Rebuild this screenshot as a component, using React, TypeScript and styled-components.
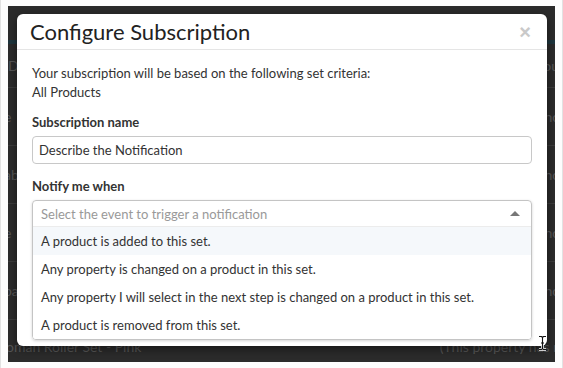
import React from 'react';
import styled, { createGlobalStyle } from 'styled-components';

const GlobalStyle = createGlobalStyle`
  html, body {
    margin: 0;
    padding: 0;
    background: #ffffff;
  }
  body {
    font-family: Lato, "Liberation Sans", Arial, sans-serif;
    color: #333;
  }
`;

const rows = [
  { left: 'ID', right: 'ou', header: true },
  { left: 'e', right: 'nc' },
  { left: 'ab', right: 'nc' },
  { left: 'e', right: 'nc' },
  { left: 'pa', right: 'nc' },
  { left: 'tomah Roller Set - Pink', right: '(This property has no' },
];

const events = [
  'A product is added to this set.',
  'Any property is changed on a product in this set.',
  'Any property I will select in the next step is changed on a product in this set.',
  'A product is removed from this set.',
];

const App: React.FC = () => {
  return (
    <>
      <GlobalStyle />
      <Frame>
        <Screen>
          <TopBar />
          <TableBehind>
            {rows.map((row, i) => (
              <Row key={i} last={i === rows.length - 1} header={row.header}>
                <LeftCell last={i === rows.length - 1}>{row.left}</LeftCell>
                <RightCell last={i === rows.length - 1}>{row.right}</RightCell>
              </Row>
            ))}
          </TableBehind>

          <Modal>
            <ModalHeader>
              <Title>Configure Subscription</Title>
              <Close>×</Close>
            </ModalHeader>
            <ModalBody>
              <Intro>
                Your subscription will be based on the following set criteria:
                <br />
                All Products
              </Intro>
              <FormGroup>
                <Label>Subscription name</Label>
                <Input defaultValue="Describe the Notification" />
              </FormGroup>
              <FormGroup>
                <Label>Notify me when</Label>
                <Select>
                  <SelectHead>
                    <Placeholder>Select the event to trigger a notification</Placeholder>
                    <Caret />
                  </SelectHead>
                  {events.map((ev, i) => (
                    <Option key={ev} active={i === 0}>
                      {ev}
                    </Option>
                  ))}
                </Select>
              </FormGroup>
            </ModalBody>
          </Modal>

          <Cursor width="9" height="16" viewBox="0 0 9 16">
            <path
              d="M1 1.5h2.5L4.5 2.5L5.5 1.5H8M4.5 2.5V13.5M1 14.5h2.5L4.5 13.5L5.5 14.5H8M3 8h3"
              fill="none"
              stroke="#fff"
              strokeWidth="2.6"
            />
            <path
              d="M1 1.5h2.5L4.5 2.5L5.5 1.5H8M4.5 2.5V13.5M1 14.5h2.5L4.5 13.5L5.5 14.5H8M3 8h3"
              fill="none"
              stroke="#111"
              strokeWidth="1.1"
            />
          </Cursor>
        </Screen>
      </Frame>
    </>
  );
};

export default App;

const Frame = styled.div`
  width: 563px;
  height: 368px;
  box-sizing: border-box;
  padding: 6px 7px 6px 7px;
  background: #fdfdfd;
  border-left: 1px solid #e2e2e2;
  border-right: 1px solid #e2e2e2;
`;

const Screen = styled.div`
  position: relative;
  height: 356px;
  background: #2b2b2b;
  overflow: hidden;
  display: flex;
  flex-direction: column;
`;

const TopBar = styled.div`
  height: 34px;
  border-bottom: 4px solid #1e353d;
  flex-shrink: 0;
`;

const TableBehind = styled.div`
  display: flex;
  flex-direction: column;
`;

const Row = styled.div<{ last?: boolean; header?: boolean }>`
  display: flex;
  justify-content: space-between;
  align-items: center;
  flex-shrink: 0;
  height: ${(p) => (p.header ? '44px' : p.last ? '40px' : '58px')};
  border-bottom: ${(p) => (p.last ? 'none' : '1px solid #3b3b3b')};
  box-sizing: border-box;
  font-family: Lato, "Liberation Sans", Arial, sans-serif;
  font-size: 14px;
  color: #555;
  padding-top: ${(p) => (p.last ? '12px' : '0')};
`;

const LeftCell = styled.span<{ last?: boolean }>`
  margin-left: ${(p) => (p.last ? '-7px' : '-4px')};
  white-space: nowrap;
`;

const RightCell = styled.span<{ last?: boolean }>`
  margin-right: ${(p) => (p.last ? '-14px' : '-4px')};
  white-space: nowrap;
`;

const Modal = styled.div`
  position: absolute;
  left: 9px;
  top: 8px;
  width: 530px;
  height: 332px;
  background: #fff;
  border-radius: 6px;
  box-shadow: 0 3px 9px rgba(0, 0, 0, 0.5);
  display: flex;
  flex-direction: column;
  overflow: hidden;
`;

const ModalHeader = styled.div`
  flex-shrink: 0;
  height: 36px;
  box-sizing: border-box;
  padding: 0 15px;
  border-bottom: 1px solid #e5e5e5;
  display: flex;
  align-items: center;
  justify-content: space-between;
`;

const Title = styled.h4`
  margin: 0 0 0 -2px;
  font-family: Lato, "Liberation Sans", Arial, sans-serif;
  font-weight: 400;
  font-size: 22px;
  color: #222;
  line-height: 1;
`;

const Close = styled.span`
  font-family: "Liberation Sans", Arial, sans-serif;
  font-size: 20px;
  font-weight: 700;
  color: #c9c9c9;
  line-height: 1;
  margin-right: 1px;
  margin-top: 1px;
`;

const ModalBody = styled.div`
  flex-shrink: 0;
  padding: 14px 15px 0 15px;
  font-size: 13px;
`;

const Intro = styled.p`
  margin: 0 0 12px 0;
  line-height: 19px;
  color: #333;
`;

const FormGroup = styled.div`
  margin-bottom: 14px;
  display: flex;
  flex-direction: column;
`;

const Label = styled.label`
  font-weight: 700;
  font-size: 13px;
  line-height: 17px;
  margin-bottom: 5px;
  color: #333;
`;

const Input = styled.input`
  height: 28px;
  box-sizing: border-box;
  border: 1px solid #c8c8c8;
  border-radius: 4px;
  padding: 0 6px;
  font-family: inherit;
  font-size: 13px;
  color: #333;
  outline: none;
`;

const Select = styled.div`
  border: 1px solid #c4c4c4;
  border-radius: 4px;
  box-shadow: 0 1px 3px rgba(0, 0, 0, 0.18);
  overflow: hidden;
`;

const SelectHead = styled.div`
  height: 25px;
  display: flex;
  align-items: center;
  justify-content: space-between;
  padding: 0 11px 0 8px;
  border-bottom: 1px solid #ececec;
`;

const Placeholder = styled.span`
  color: #999;
  font-size: 13px;
`;

const Caret = styled.span`
  width: 0;
  height: 0;
  border-left: 5px solid transparent;
  border-right: 5px solid transparent;
  border-bottom: 5px solid #777;
`;

const Option = styled.div<{ active?: boolean }>`
  height: 28px;
  display: flex;
  align-items: center;
  padding: 0 8px;
  font-size: 13px;
  color: #333;
  background: ${(p) => (p.active ? '#f5f8fb' : '#fff')};
`;

const Cursor = styled.svg`
  position: absolute;
  left: 530px;
  top: 329px;
`;
